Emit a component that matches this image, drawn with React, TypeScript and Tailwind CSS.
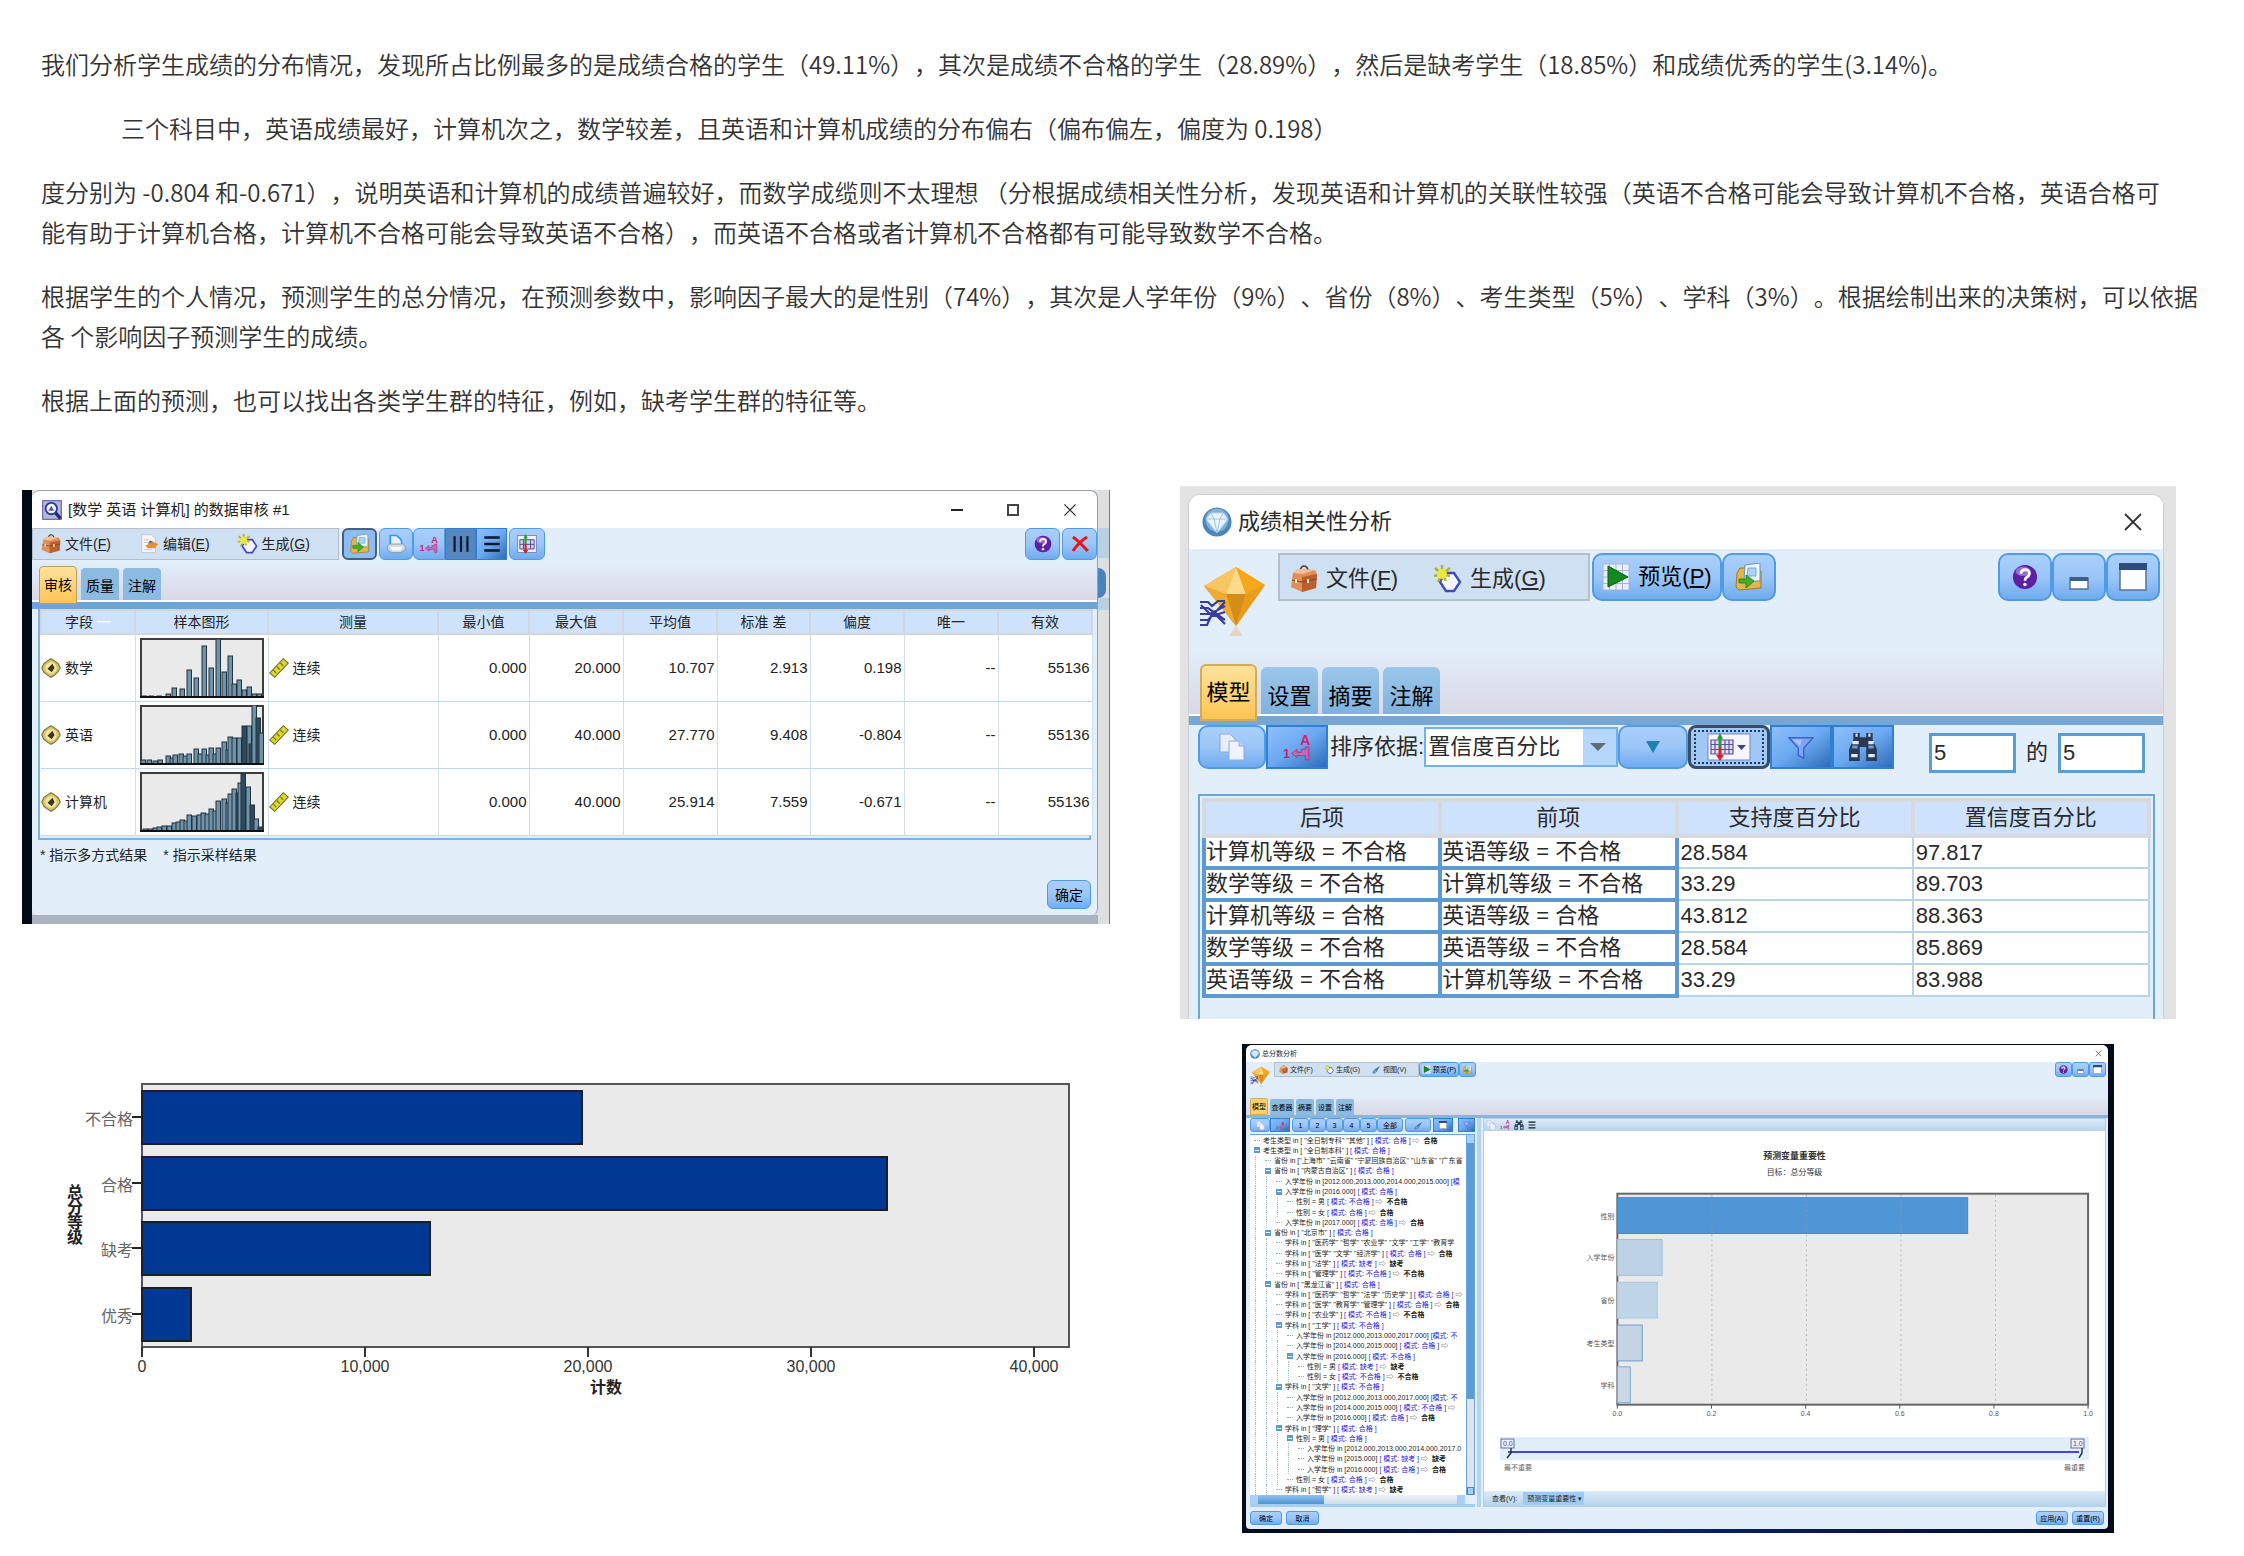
import React from "react";

type IconProps = { className?: string };

const btn =
  "flex shrink-0 items-center justify-center border border-[#4f9be6] bg-linear-to-b from-[#a9cffb] via-[#9cc6f8] to-[#6fabee] text-black";
const pressed =
  "flex shrink-0 items-center justify-center border border-[#2f7fd6] bg-linear-to-br from-[#8fc0fb] via-[#6aa8f0] to-[#2f6cb8] text-black";

/* ---------- icons ---------- */

const Briefcase = ({ className }: IconProps) => (
  <svg viewBox="0 0 28 28" className={className} aria-hidden="true">
    <path d="M10 6 Q11 1 14 1 Q17 1 18 5" fill="none" stroke="#4a3a30" strokeWidth="1.6" />
    <path d="M3 8 L8 4 L25 5 L27 9 L26 23 L12 27 L1 22 Z" fill="#e08e5a" />
    <path d="M3 8 L8 4 L25 5 L13 9 Z" fill="#f6c09a" />
    <path d="M12 12 L27 9 L26 23 L12 27 Z" fill="#b9602e" />
    <path d="M2 15 L12 17 L27 14" fill="none" stroke="#8f4520" strokeWidth="1.2" />
    <path d="M6 14 V18 M18 14 V18" stroke="#f4ead8" strokeWidth="2" />
  </svg>
);

const Sparkle = ({ className }: IconProps) => (
  <svg viewBox="0 0 28 28" className={className} aria-hidden="true">
    <path d="M11 8 H20 L26 17 L20 26 H12 L6 17 Z" fill="#f4f7ff" stroke="#4448c0" strokeWidth="2.4" />
    <path d="M8 9 L1 3 M8 9 L8 0 M8 9 L16 3 M8 9 L0 11 M8 9 L16 11 M8 9 L4 17 M8 9 L12 16" stroke="#b3b02a" strokeWidth="2.4" />
    <circle cx="8" cy="9" r="5" fill="#e8ea3c" />
  </svg>
);

const EditPage = ({ className }: IconProps) => (
  <svg viewBox="0 0 28 28" className={className} aria-hidden="true">
    <path d="M4 1 H17 L23 7 V26 H4 Z" fill="#f8f8fb" stroke="#b9bccb" />
    <path d="M7 8 H14 M7 12 H15 M7 22 H19" stroke="#c4c9da" strokeWidth="1.5" />
    <path d="M9 16 L20 11 L27 14 L22 20 L12 20 Z" fill="#e98c3c" />
    <path d="M15 9 L20 11 L13 14 Z" fill="#595a60" />
  </svg>
);

const ExportIcon = ({ className }: IconProps) => (
  <svg viewBox="0 0 28 28" className={className} aria-hidden="true">
    <path d="M2 10 L5 5 H11 L13 8 H26 V25 L4 27 L1 24 Z" fill="#e3b648" stroke="#9a7b26" />
    <path d="M10 2 L25 0 V18 H9 Z" fill="#eef6fd" stroke="#6d93b8" />
    <path d="M13 5 H21 V13 H12 Z" fill="#a9d5f4" stroke="#5c9aca" strokeWidth="0.8" />
    <path d="M4 16 H11 V12 L19 18 L11 25 V20 H4 Z" fill="#42b02e" stroke="#23761a" strokeWidth="0.8" />
  </svg>
);

const PrinterIcon = ({ className }: IconProps) => (
  <svg viewBox="0 0 28 28" className={className} aria-hidden="true">
    <path d="M6 2 H15 L21 8 L23 17 H6 Z" fill="#e4f3ff" stroke="#2d96ef" strokeWidth="2.2" />
    <path d="M2 17 L5 14 H24 L27 18 V22 L20 26 H8 L2 22 Z" fill="#d4d9df" stroke="#7d8b99" />
    <path d="M6 18 H24 L20 23 H9 Z" fill="#f6f8fa" />
  </svg>
);

const SortIcon = ({ className }: IconProps) => (
  <svg viewBox="0 0 28 28" className={className} aria-hidden="true">
    <text x="17" y="12" fontSize="13" fontWeight="700" fill="#d3206d" fontFamily="Liberation Sans">A</text>
    <text x="1" y="24" fontSize="12" fontWeight="700" fill="#d3206d" fontFamily="Liberation Sans">1</text>
    <path d="M9 20 L14 16 V19 H18 V16 H22 V14 H25 V26 H22 V22 H14 V24 Z" fill="#b46ec0" stroke="#d3206d" strokeWidth="0.8" />
  </svg>
);

const Columns = ({ className }: IconProps) => (
  <svg viewBox="0 0 28 28" className={className} aria-hidden="true">
    <path d="M4 2 V26 M14 2 V26 M24 2 V26" stroke="#0c1826" strokeWidth="3.4" />
  </svg>
);

const Rows = ({ className }: IconProps) => (
  <svg viewBox="0 0 28 28" className={className} aria-hidden="true">
    <path d="M2 4 H26 M2 14 H26 M2 24 H26" stroke="#0c1826" strokeWidth="4" />
  </svg>
);

const GridArrows = ({ className }: IconProps) => (
  <svg viewBox="0 0 28 28" className={className} aria-hidden="true">
    <rect x="1" y="2" width="26" height="24" fill="#f2f2fb" stroke="#6a6aa8" />
    <path d="M4 8 H24 V21 H4 Z M4 14.500 H24 M9 8 V21 M19 8 V21" fill="#d3d3f0" stroke="#4b4b95" strokeWidth="1.3" />
    <path d="M12 0 L15 6 H13.500 V14 H10.500 V6 H9 Z" fill="#23a02c" />
    <path d="M12 28 L16 22 H13.500 V14 H10.500 V22 H8 Z" fill="#d8232b" />
  </svg>
);

const GridMenu = ({ className }: IconProps) => (
  <svg viewBox="0 0 44 28" className={className} aria-hidden="true">
    <rect x="1" y="1" width="42" height="26" fill="#f6f6fc" stroke="#7d86b8" />
    <path d="M4 7 H26 V21 H4 Z M4 11.500 H26 M4 16.500 H26 M8 7 V21 M18 7 V21 M22 7 V21" fill="#e4e0f4" stroke="#5a4fa0" strokeWidth="1.2" />
    <path d="M13 0 L16 6 H14.500 V14 H11.500 V6 H10 Z" fill="#23a02c" />
    <path d="M13 28 L17 22 H14.500 V14 H11.500 V22 H9 Z" fill="#d8232b" />
    <path d="M30 12 H39 L34.500 17 Z" fill="#3b3f9e" />
  </svg>
);

const HelpIcon = ({ className }: IconProps) => (
  <svg viewBox="0 0 28 28" className={className} aria-hidden="true">
    <circle cx="14" cy="14" r="13" fill="#5c1fa6" />
    <ellipse cx="12" cy="8" rx="8" ry="5" fill="#9b6bd0" />
    <path d="M9.500 10.500 Q10 6 14.500 6 Q19 6.500 18.800 10.500 Q18.500 13 15.500 14.500 Q14 15.500 14 18" fill="none" stroke="#fff" strokeWidth="3" />
    <circle cx="14" cy="22" r="1.900" fill="#fff" />
  </svg>
);

const RedX = ({ className }: IconProps) => (
  <svg viewBox="0 0 28 28" className={className} aria-hidden="true">
    <path d="M3 3 Q13 10 26 25 M25 3 Q12 11 3 25" fill="none" stroke="#e8141c" strokeWidth="4.600" />
  </svg>
);

const Gem = ({ className }: IconProps) => (
  <svg viewBox="0 0 68 72" className={className} aria-hidden="true">
    <path d="M38 60 L31 70 H45 Z" fill="#e3d6c4" />
    <path d="M38 1 L67 19 L38 60 L6 20 Z" fill="#f0a51e" />
    <path d="M38 1 L48 28 L28 28 Z" fill="#fcd98c" />
    <path d="M38 1 L6 20 L28 28 Z" fill="#f8c565" />
    <path d="M38 1 L67 19 L48 28 Z" fill="#f5a81b" />
    <path d="M28 28 H48 L38 60 Z" fill="#d58d1a" />
    <path d="M48 28 L67 19 L38 60 Z" fill="#e99c18" />
    <path d="M6 20 L28 28 L38 60 Z" fill="#eeaa33" />
    <path d="M2 36 H10 L14 40 L20 35 H27 M2 42 H10 L27 54 M2 48 H12 L27 40 M2 54 H10 L27 36 M2 59 H9 L15 46 L27 58 M3 39 L14 50 L27 46" fill="none" stroke="#3c3c98" strokeWidth="2.200" />
  </svg>
);

const BlueGem = ({ className }: IconProps) => (
  <svg viewBox="0 0 30 30" className={className} aria-hidden="true">
    <circle cx="15" cy="15" r="14.500" fill="#4a86bd" />
    <circle cx="15" cy="13" r="11.500" fill="#83b2da" />
    <path d="M9 6 H21 L26 12 L15 26 L4 12 Z" fill="#e9f5fc" stroke="#b7d5ea" />
    <path d="M4 12 H26 M9 6 L12 12 L15 26 L18 12 L21 6" fill="none" stroke="#9dc4e0" />
  </svg>
);

const AuditIcon = ({ className }: IconProps) => (
  <svg viewBox="0 0 28 28" className={className} aria-hidden="true">
    <rect x="1" y="1" width="26" height="26" fill="#b4b8e0" stroke="#5557a8" strokeWidth="1.500" />
    <circle cx="13" cy="12" r="8" fill="#f2f4ff" stroke="#35378c" strokeWidth="2.600" />
    <path d="M19 18 L26 26" stroke="#25277c" strokeWidth="4.500" />
    <path d="M9 15 L13 8 L17 15 Z" fill="#5557a8" />
  </svg>
);

const FieldIcon = ({ className }: IconProps) => (
  <svg viewBox="0 0 28 28" className={className} aria-hidden="true">
    <path d="M14 1 L19 4 L24 8 L27 14 L23 20 L19 24 L14 27 L9 24 L4 20 L1 14 L4 8 L9 4 Z" fill="#d8c468" stroke="#77703a" strokeWidth="1.500" />
    <circle cx="14" cy="14" r="8" fill="#f4e6a0" />
    <path d="M16 8 L19 14 L15 20 L9 15 Z" fill="#3c3820" />
  </svg>
);

const Ruler = ({ className }: IconProps) => (
  <svg viewBox="0 0 28 28" className={className} aria-hidden="true">
    <path d="M1 21 L20 1 L27 7 L8 27 Z" fill="#dcd62f" stroke="#6b6a1c" strokeWidth="1.500" />
    <path d="M6 17 L10 21 M11 12 L15 16 M16 7 L20 11" stroke="#7b7a22" strokeWidth="1.800" />
  </svg>
);

const CopyIcon = ({ className }: IconProps) => (
  <svg viewBox="0 0 28 28" className={className} aria-hidden="true">
    <path d="M2 1 H12 L17 6 V19 H2 Z" fill="#e6edfb" stroke="#8fa8dc" />
    <path d="M11 8 H21 L26 13 V27 H11 Z" fill="#eef3fd" stroke="#8fa8dc" />
    <path d="M21 8 V13 H26" fill="#c8d6f2" stroke="#8fa8dc" />
  </svg>
);

const Funnel = ({ className }: IconProps) => (
  <svg viewBox="0 0 28 28" className={className} aria-hidden="true">
    <path d="M1 4 H27 L17 15 V26 L11 23 V15 Z" fill="#7fa6f2" stroke="#3c62c8" strokeWidth="1.500" />
    <path d="M5 6 H15 L13 13 Z" fill="#aac6fa" />
  </svg>
);

const Binoculars = ({ className }: IconProps) => (
  <svg viewBox="0 0 28 28" className={className} aria-hidden="true">
    <path d="M5 1 H11 V5 H17 V1 H23 V7 L27 16 V27 H17 V14 H11 V27 H1 V16 L5 7 Z" fill="#2a3a52" />
    <path d="M4 10 H10 M3 22 H9 M19 10 H24 M19 22 H25 M7 3 H9 M19 3 H21" stroke="#dfe8f4" strokeWidth="3" />
    <path d="M4 14 H9 M19 14 H24" stroke="#6a9be0" strokeWidth="3" />
  </svg>
);

const MinWin = ({ className }: IconProps) => (
  <svg viewBox="0 0 28 28" className={className} aria-hidden="true">
    <rect x="5" y="15" width="18" height="11" fill="#fff" stroke="#5a7396" strokeWidth="1.500" />
    <rect x="5" y="14" width="18" height="4" fill="#3d5f8d" />
  </svg>
);

const MaxWin = ({ className }: IconProps) => (
  <svg viewBox="0 0 28 28" className={className} aria-hidden="true">
    <rect x="1" y="1" width="26" height="26" fill="#fff" stroke="#5a7396" strokeWidth="1.500" />
    <rect x="0" y="0" width="28" height="7" fill="#2d4c7c" />
  </svg>
);

const PlayGrid = ({ className }: IconProps) => (
  <svg viewBox="0 0 28 28" className={className} aria-hidden="true">
    <path d="M1 1 H27 V27 H1 Z M1 7.500 H27 M1 14 H27 M1 20.500 H27 M7.500 1 V27 M14 1 V27 M20.500 1 V27" fill="#e9effa" stroke="#a9b4d8" />
    <path d="M6 3 L26 14 L6 24 Z" fill="#128a1e" stroke="#0b5c14" />
  </svg>
);

const Brush = ({ className }: IconProps) => (
  <svg viewBox="0 0 28 28" className={className} aria-hidden="true">
    <path d="M26 2 L14 20 L8 14 Z" fill="#3e6f9c" />
    <path d="M12 14 L16 19 L6 27 L2 25 L4 18 Z" fill="#6ea7d8" stroke="#24486c" />
  </svg>
);

const CloseX = ({ className }: IconProps) => (
  <svg viewBox="0 0 20 20" className={className} aria-hidden="true">
    <path d="M2 2 L18 18 M18 2 L2 18" stroke="#333" strokeWidth="1.800" />
  </svg>
);

/* ---------- window 1: data audit ---------- */

const math: [number, number][] = [[2, 1], [9, 1], [17, 1], [26, 3], [32, 9], [40, 8], [47, 27], [54, 19], [62, 51], [69, 29], [76, 58], [82, 25], [88, 41], [92, 13], [97, 17], [102, 7], [107, 10], [112, 3], [117, 3]];
const english: [number, number][] = [[1, 4], [7, 4], [13, 3], [18, 4], [26, 8], [30, 6], [33, 9], [39, 10], [43, 8], [47, 10], [54, 15], [58, 10], [62, 15], [66, 9], [69, 16], [73, 10], [76, 16], [82, 22], [86, 14], [88, 27], [92, 26], [97, 26], [102, 38], [107, 38], [109, 20], [112, 59], [116, 46], [119, 31]];
const computer: [number, number][] = [[3, 2], [8, 2], [13, 3], [17, 4], [22, 5], [27, 5], [32, 8], [36, 9], [40, 11], [44, 10], [47, 16], [52, 15], [57, 16], [61, 18], [65, 17], [69, 22], [73, 20], [76, 30], [82, 32], [86, 28], [88, 37], [92, 42], [96, 38], [98, 48], [101, 57], [106, 44], [110, 26], [114, 12], [118, 4]];

const Histogram = ({ bars, label }: { bars: [number, number][]; label: string }) => (
  <svg viewBox="0 0 124 60" className="h-[60px] w-[124px]" role="img" aria-label={label}>
    <rect x="1" y="1" width="122" height="58" fill="#eaeaea" stroke="#3d3d3d" strokeWidth="2" />
    {bars.map(([x, h], i) => (
      <rect key={i} x={x} y={59 - h} width="4.500" height={h} fill={i > 20 && i % 2 === 0 ? "#2d4b5e" : "#6f93a8"} stroke="#22333f" strokeWidth="1" />
    ))}
    <path d="M0 59 H124" stroke="#111" strokeWidth="2" />
  </svg>
);

const auditRows = [
  { name: "数学", bars: math, v: ["0.000", "20.000", "10.707", "2.913", "0.198", "--", "55136"] },
  { name: "英语", bars: english, v: ["0.000", "40.000", "27.770", "9.408", "-0.804", "--", "55136"] },
  { name: "计算机", bars: computer, v: ["0.000", "40.000", "25.914", "7.559", "-0.671", "--", "55136"] },
];

const AuditWindow = () => (
  <section className="mt-1 flex h-[434px] overflow-hidden bg-[#dedfe1] text-sm leading-none text-[#222]" aria-label="数据审核">
    <div className="w-[10px] shrink-0 bg-[#020a18]" />
    <div className="flex min-w-0 flex-1 flex-col border-b-9 border-[#a9b4c0]">
      <div className="flex min-h-0 flex-1 flex-col rounded-t-lg rounded-b-md border-t border-r border-[#9aa0a6] bg-[#e2effb]">
        <header className="flex h-[37px] shrink-0 items-center rounded-t-lg bg-white pr-5 pl-[10px]">
          <AuditIcon className="size-5" />
          <h2 className="ml-1.5 text-[15px]">[数学 英语 计算机] 的数据审核 #1</h2>
          <div className="ml-auto flex items-center gap-11">
            <button aria-label="最小化" className="h-0.5 w-3 bg-[#222]" />
            <button aria-label="最大化" className="size-3 border-2 border-[#444]" />
            <button aria-label="关闭"><CloseX className="size-3.5" /></button>
          </div>
        </header>
        <div className="flex h-[72px] shrink-0 flex-col bg-linear-to-b from-[#e2effb] from-45% to-[#d9d8e6]">
          <div className="flex h-8 items-stretch">
            <nav className="flex w-[307px] items-center gap-7 border border-[#b4bdc8] bg-[#cfe0f2] pl-2">
              <button className="flex items-center gap-1"><Briefcase className="size-5" /><span>文件(<u>F</u>)</span></button>
              <button className="flex items-center gap-1"><EditPage className="size-5" /><span>编辑(<u>E</u>)</span></button>
              <button className="flex items-center gap-1"><Sparkle className="size-5" /><span>生成(<u>G</u>)</span></button>
            </nav>
            <div className="ml-[3px] flex">
              <button aria-label="导出" className="mr-0.5 flex w-[35px] items-center justify-center rounded-md border-2 border-[#46617e] bg-[#8fbcf0]"><ExportIcon className="size-5" /></button>
              <button aria-label="打印" className={`${btn} w-[34px] rounded-md`}><PrinterIcon className="size-5" /></button>
              <button aria-label="排序" className={`${btn} w-8 rounded-l-md`}><SortIcon className="size-5" /></button>
              <button aria-label="列" className="flex w-[31px] items-center justify-center border border-[#2f7fd6] bg-[#5687c0]"><Columns className="size-[18px]" /></button>
              <button aria-label="行" className={`${pressed} mr-0.5 w-[31px]`}><Rows className="size-[18px]" /></button>
              <button aria-label="显示" className={`${btn} w-9 rounded-md`}><GridArrows className="size-5" /></button>
            </div>
            <div className="ml-auto flex gap-0.5">
              <button aria-label="帮助" className={`${btn} w-[35px] rounded-md`}><HelpIcon className="size-[18px]" /></button>
              <button aria-label="放弃" className={`${btn} w-[35px] rounded-md`}><RedX className="size-[18px]" /></button>
            </div>
          </div>
          <div role="tablist" className="mt-auto flex items-end gap-1 pl-[7px]">
            <button role="tab" aria-selected="true" className="relative -mb-1 h-[38px] w-[38px] rounded-t border border-[#b9a05a] bg-linear-to-b from-[#fde29a] to-[#fcc550] text-black">审核</button>
            <button role="tab" aria-selected="false" className="h-8 w-[38px] rounded-t bg-[#8cbbe2] pt-1 text-black">质量</button>
            <button role="tab" aria-selected="false" className="h-8 w-[38px] rounded-t bg-[#8cbbe2] pt-1 text-black">注解</button>
          </div>
        </div>
        <div className="h-[9px] shrink-0 border-t-2 border-white bg-[#6fa4d6]" />
        <div className="mx-[6px] border-2 border-t-0 border-[#7fb2e2] bg-[#e2effb] pr-1 pb-0.5">
          <table className="w-full table-fixed border-collapse bg-white">
            <colgroup>
              <col className="w-[94px]" /><col className="w-[133px]" /><col className="w-[170px]" /><col className="w-[91px]" /><col className="w-[94px]" />
              <col className="w-[94px]" /><col className="w-[93px]" /><col className="w-[94px]" /><col className="w-[94px]" /><col className="w-[94px]" />
            </colgroup>
            <thead>
              <tr className="h-6">
                {["字段", "样本图形", "测量", "最小值", "最大值", "平均值", "标准 差", "偏度", "唯一", "有效"].map((h, i) => (
                  <th key={h} scope="col" className="border-2 border-[#d3d7dd] bg-[#cfe2fb] font-normal">
                    {h}{i === 0 && <span className="ml-1 text-white">一</span>}
                  </th>
                ))}
              </tr>
            </thead>
            <tbody>
              {auditRows.map((r) => (
                <tr key={r.name} className="h-[67px] border-b border-[#bcd7ef]">
                  <td className="border-r border-[#cfe0f0]"><span className="flex items-center gap-1"><FieldIcon className="size-5" />{r.name}</span></td>
                  <td className="border-r border-[#cfe0f0] pl-1"><Histogram bars={r.bars} label={r.name} /></td>
                  <td className="border-r border-[#cfe0f0]"><span className="flex items-center gap-1"><Ruler className="size-5" />连续</span></td>
                  {r.v.map((v, i) => (
                    <td key={i} className="border-r border-[#cfe0f0] pr-0.5 text-right text-[15px]">{v}</td>
                  ))}
                </tr>
              ))}
            </tbody>
          </table>
        </div>
        <p className="mt-2 flex gap-4 pl-2"><span>* 指示多方式结果</span><span>* 指示采样结果</span></p>
        <button className={`${btn} mt-auto mr-[6px] mb-[6px] h-[29px] w-11 self-end rounded-md`}>确定</button>
      </div>
    </div>
    <div className="flex w-3 shrink-0 flex-col border-r border-[#77797c]">
      <div className="mt-[38px] h-[30px] bg-[#b9cfe2]" />
      <div className="mt-2.5 h-[30px] w-2 rounded-r-full bg-[#4a83bb]" />
      <div className="h-3 bg-[#b9cfe2]" />
    </div>
  </section>
);

/* ---------- window 2: correlation analysis ---------- */

const rules = [
  ["计算机等级 = 不合格", "英语等级 = 不合格", "28.584", "97.817"],
  ["数学等级 = 不合格", "计算机等级 = 不合格", "33.29", "89.703"],
  ["计算机等级 = 合格", "英语等级 = 合格", "43.812", "88.363"],
  ["数学等级 = 不合格", "英语等级 = 不合格", "28.584", "85.869"],
  ["英语等级 = 不合格", "计算机等级 = 不合格", "33.29", "83.988"],
];

const CorrelationWindow = () => (
  <section className="h-[533px] overflow-hidden bg-[#e3e3e4] pt-2 pr-3 pl-2 text-[22px] leading-none text-[#2a2a2a]" aria-label="成绩相关性分析">
    <div className="flex h-full flex-col overflow-hidden rounded-t-xl border border-b-0 border-[#cfcfd2] bg-[#e2effb]">
      <header className="flex h-[54px] shrink-0 items-center bg-white pr-5 pl-[13px]">
        <BlueGem className="size-[30px]" />
        <h2 className="ml-1.5 text-[22px]">成绩相关性分析</h2>
        <button aria-label="关闭" className="ml-auto"><CloseX className="size-5" /></button>
      </header>
      <div className="flex h-[165px] shrink-0 flex-col bg-linear-to-b from-[#e2effb] from-60% to-[#d9d8e6]">
        <div className="flex pt-1 pr-[3px] pl-[9px]">
          <Gem className="mt-[13px] h-[72px] w-[68px]" />
          <nav className="ml-3 flex h-12 w-[312px] items-center gap-9 border-2 border-[#b7bfc9] bg-[#cfe0f2] pt-1 pl-2.5">
            <button className="flex items-center gap-2"><Briefcase className="size-7" /><span>文件(<u>F</u>)</span></button>
            <button className="flex items-center gap-2"><Sparkle className="size-7" /><span>生成(<u>G</u>)</span></button>
          </nav>
          <button className={`${btn} ml-0.5 h-12 w-[130px] gap-2 rounded-[10px] border-2`}><PlayGrid className="size-7" /><span>预览(<u>P</u>)</span></button>
          <button aria-label="导出" className={`${btn} h-12 w-[54px] rounded-[10px] border-2`}><ExportIcon className="size-7" /></button>
          <div className="ml-auto flex">
            <button aria-label="帮助" className={`${btn} h-12 w-[54px] rounded-[10px] border-2`}><HelpIcon className="size-[26px]" /></button>
            <button aria-label="最小化" className={`${btn} h-12 w-[54px] rounded-[10px] border-2`}><MinWin className="size-7" /></button>
            <button aria-label="最大化" className={`${btn} h-12 w-[54px] rounded-[10px] border-2`}><MaxWin className="size-7" /></button>
          </div>
        </div>
        <div role="tablist" className="mt-auto flex items-end gap-1 pl-[11px] text-black">
          <button role="tab" aria-selected="true" className="relative -mb-[7px] h-[57px] w-[57px] rounded-t-md border-2 border-[#d0ac5c] bg-linear-to-b from-[#fde29a] to-[#fcc550]">模型</button>
          {["设置", "摘要", "注解"].map((t) => (
            <button key={t} role="tab" aria-selected="false" className="h-[47px] w-[57px] rounded-t-md bg-linear-to-b from-[#9cc6ea] to-[#7fb2de] pt-3">{t}</button>
          ))}
        </div>
      </div>
      <div className="h-[11px] shrink-0 border-t-2 border-white bg-[#74a6d6]" />
      <div className="flex h-11 shrink-0 items-center pr-[18px] pl-[9px]">
        <button aria-label="复制" className={`${btn} h-11 w-[68px] rounded-[10px] border-2`}><CopyIcon className="size-7" /></button>
        <button aria-label="排序" className={`${pressed} h-11 w-[62px] border-2`}><SortIcon className="size-[30px]" /></button>
        <label htmlFor="sort-by" className="ml-0.5 whitespace-nowrap">排序依据:</label>
        <div className="relative flex h-10 w-[194px] items-center border-2 border-[#6fb0f0] bg-[#b5d7fb]">
          <select id="sort-by" className="h-full w-[157px] appearance-none bg-white pl-0.5">
            <option>置信度百分比</option>
          </select>
          <span className="pointer-events-none absolute right-2.5 border-x-8 border-t-8 border-x-transparent border-t-[#5f6b78]" />
        </div>
        <button aria-label="方向" className={`${btn} h-11 w-[70px] rounded-[10px] border-2`}>
          <span className="border-x-7 border-t-12 border-x-transparent border-t-[#1f7fae]" />
        </button>
        <button aria-label="显示" className="flex h-11 w-[82px] shrink-0 items-center justify-center rounded-lg border-3 border-[#3c4c60] bg-[#9fc8f6]">
          <span className="flex h-[34px] w-[70px] items-center justify-center border-2 border-dotted border-[#1d3a60]"><GridMenu className="h-7 w-11" /></span>
        </button>
        <button aria-label="过滤" className={`${pressed} h-11 w-[62px] border-2`}><Funnel className="size-[26px]" /></button>
        <button aria-label="查找" className={`${pressed} h-11 w-[62px] border-2`}><Binoculars className="size-[30px]" /></button>
        <div className="mt-3 ml-auto flex items-center gap-2.5">
          <input aria-label="当前" defaultValue="5" className="h-10 w-[87px] border-3 border-[#5d9bd3] bg-white pl-0.5" />
          <span>的</span>
          <input aria-label="总数" defaultValue="5" className="h-10 w-[87px] border-3 border-[#5d9bd3] bg-white pl-0.5" />
        </div>
      </div>
      <div className="mt-[25px] mr-2 ml-[9px] flex-1 border-2 border-b-0 border-[#6aa6da] p-0.5">
        <table className="w-full table-fixed border-collapse">
          <thead>
            <tr className="h-9">
              {["后项", "前项", "支持度百分比", "置信度百分比"].map((h) => (
                <th key={h} scope="col" className="border-4 border-[#d6d9de] bg-[#cfe2fb] font-normal">{h}</th>
              ))}
            </tr>
          </thead>
          <tbody>
            {rules.map((r, i) => (
              <tr key={i} className="h-8 bg-white">
                {r.map((c, j) => (
                  <td key={j} className={j < 2 ? "border-4 border-[#5e9ad2] whitespace-nowrap" : "border-2 border-[#b9d3ea] pl-0.5"}>{c}</td>
                ))}
              </tr>
            ))}
          </tbody>
        </table>
      </div>
    </div>
  </section>
);

/* ---------- bar chart: total grade counts ---------- */

const gradeBars = [
  { name: "不合格", y: 21, w: 440 },
  { name: "合格", y: 87, w: 745 },
  { name: "缺考", y: 152, w: 288 },
  { name: "优秀", y: 218, w: 49 },
];

const GradeChart = () => (
  <svg viewBox="0 0 1040 340" className="w-full" role="img" aria-label="总分等级计数" fontFamily="'Liberation Sans','Noto Sans CJK SC',sans-serif" fontSize="16">
    <rect x="92" y="14" width="927" height="263" fill="#eaeaea" stroke="#555" strokeWidth="2" />
    {gradeBars.map((b) => (
      <g key={b.name}>
        <rect x="92" y={b.y} width={b.w} height="53" fill="#003893" stroke="#1a1f2b" strokeWidth="2" />
        <path d={`M82 ${b.y + 26} H92`} stroke="#222" strokeWidth="2" />
        <text x="83" y={b.y + 34} textAnchor="end" fill="#666">{b.name}</text>
      </g>
    ))}
    {["0", "10,000", "20,000", "30,000", "40,000"].map((t, i) => (
      <g key={t}>
        <path d={`M${92 + i * 223} 277 V287`} stroke="#333" strokeWidth="2" />
        <text x={92 + i * 223} y="302" textAnchor="middle" fill="#333">{t}</text>
      </g>
    ))}
    <text x="556" y="323" textAnchor="middle" fontWeight="700" fill="#222">计数</text>
    {["总", "分", "等", "级"].map((c, i) => (
      <text key={c} x="25" y={128 + i * 15} textAnchor="middle" fontWeight="700" fill="#222">{c}</text>
    ))}
  </svg>
);

/* ---------- window 3: decision tree ---------- */

/* depth, has a toggle, rule, mode, result */
type Row = [number, boolean, string, string, string];
const grades = ["合格", "不合格", "缺考"];
const tree: Row[] = [
  [0, false, '考生类型 in [ "全日制专科" "其他" ]', "合格", "合格"],
  [0, true, '考生类型 in [ "全日制本科" ]', "合格", ""],
  [1, false, '省份 in ["上海市" "云南省" "宁夏回族自治区" "山东省" "广东省', "", ""],
  [1, true, '省份 in [ "内蒙古自治区" ]', "合格", ""],
  [2, false, "入学年份 in [2012.000,2013.000,2014.000,2015.000]", "[模", ""],
  [2, true, "入学年份 in [2016.000]", "合格", ""],
  [3, false, "性别 = 男", "不合格", "不合格"],
  [3, false, "性别 = 女", "合格", "合格"],
  [2, false, "入学年份 in [2017.000]", "合格", "合格"],
  [1, true, '省份 in [ "北京市" ]', "合格", ""],
  [2, false, '学科 in [ "医药学" "哲学" "农业学" "文学" "工学" "教育学', "", ""],
  [2, false, '学科 in [ "医学" "文学" "经济学" ]', "合格", "合格"],
  [2, false, '学科 in [ "法学" ]', "缺考", "缺考"],
  [2, false, '学科 in [ "管理学" ]', "不合格", "不合格"],
  [1, true, '省份 in [ "黑龙江省" ]', "合格", ""],
  [2, false, '学科 in [ "医药学" "哲学" "法学" "历史学" ]', "合格", " "],
  [2, false, '学科 in [ "医学" "教育学" "管理学" ]', "合格", "合格"],
  [2, false, '学科 in [ "农业学" ]', "不合格", "不合格"],
  [2, true, '学科 in [ "工学" ]', "不合格", ""],
  [3, false, "入学年份 in [2012.000,2013.000,2017.000]", "[模式: 不", ""],
  [3, false, "入学年份 in [2014.000,2015.000]", "合格", " "],
  [3, true, "入学年份 in [2016.000]", "不合格", ""],
  [4, false, "性别 = 男", "缺考", "缺考"],
  [4, false, "性别 = 女", "不合格", "不合格"],
  [2, true, '学科 in [ "文学" ]', "不合格", ""],
  [3, false, "入学年份 in [2012.000,2013.000,2017.000]", "[模式: 不", ""],
  [3, false, "入学年份 in [2014.000,2015.000]", "不合格", " "],
  [3, false, "入学年份 in [2016.000]", "合格", "合格"],
  [2, true, '学科 in [ "理学" ]', "合格", ""],
  [3, true, "性别 = 男", "合格", ""],
  [4, false, "入学年份 in [2012.000,2013.000,2014.000,2017.0", "", ""],
  [4, false, "入学年份 in [2015.000]", "缺考", "缺考"],
  [4, false, "入学年份 in [2016.000]", "合格", "合格"],
  [3, false, "性别 = 女", "合格", "合格"],
  [2, false, '学科 in [ "哲学" ]', "缺考", "缺考"],
];

const TreeRow = ({ row }: { row: Row }) => {
  const [depth, toggle, rule, mode, result] = row;
  return (
    <li className="flex min-h-0 flex-1 items-center whitespace-pre">
      {Array.from({ length: depth }, (_, i) => (
        <span key={i} className="flex h-full w-[11px] shrink-0 justify-center"><span className="border-l border-dotted border-[#9cc3e4]" /></span>
      ))}
      <span className="flex w-[13px] shrink-0 items-center pl-1">
        {toggle ? (
          <button aria-label="折叠" className="flex size-1.5 items-center justify-center bg-[#5a9bd4]"><span className="h-px w-1 bg-white" /></button>
        ) : (
          <span className="w-1.5 border-t border-dotted border-[#7fb0d8]" />
        )}
      </span>
      {rule}
      {mode && <span className="text-[#2a22e0]"> {grades.includes(mode) ? `[ 模式: ${mode} ]` : mode}</span>}
      {result && <span className="font-bold"> <span className="font-normal">⇨</span>  {result}</span>}
    </li>
  );
};

const importance = [
  { name: "性别", y: 4, w: 352, fill: "#5096d6", stroke: "#4488c8" },
  { name: "入学年份", y: 46, w: 45, fill: "#bdd2e4", stroke: "#9cc0e0" },
  { name: "省份", y: 89, w: 40, fill: "#bfd4e6", stroke: "#a8c8e4" },
  { name: "考生类型", y: 132, w: 25, fill: "#c4d4e4", stroke: "#6a9fd4" },
  { name: "学科", y: 174, w: 13, fill: "#c9d8e4", stroke: "#7aaad8" },
];

const ImportanceChart = () => (
  <svg viewBox="0 2 624 298" className="w-full" role="img" aria-label="预测变量重要性" fontFamily="'Liberation Sans','Noto Sans CJK SC',sans-serif" fontSize="7" fill="#555">
    <text x="312" y="30" textAnchor="middle" fontSize="9" fontWeight="700" fill="#333">预测变量重要性</text>
    <text x="312" y="46" textAnchor="middle" fontSize="8" fill="#333">目标：总分等级</text>
    <rect x="134" y="65" width="473" height="212" fill="#eaeaea" stroke="#666" strokeWidth="2" />
    {importance.map((b) => (
      <g key={b.name}>
        <rect x="134" y={65 + b.y} width={b.w} height="36" fill={b.fill} stroke={b.stroke} />
        <text x="131" y={65 + b.y + 21} textAnchor="end">{b.name}</text>
      </g>
    ))}
    {[0, 1, 2, 3, 4, 5].map((i) => (
      <g key={i}>
        {i > 0 && i < 5 && <path d={`M${134 + i * 95} 66 V276`} stroke="#999" strokeDasharray="2 3" opacity="0.600" />}
        <path d={`M${134 + i * (473 / 5)} 277 V281`} stroke="#555" />
        <text x={134 + i * (473 / 5)} y="288" textAnchor="middle">{(i / 5).toFixed(1)}</text>
      </g>
    ))}
  </svg>
);

const smallBtn = "rounded-[3px]";

const TreeWindow = () => (
  <section className="flex h-[489px] overflow-hidden bg-[#030a1c] pt-px pr-1.5 pl-1 text-[7px] leading-none text-[#222]" aria-label="决策树">
    <div className="flex min-w-0 flex-1 flex-col">
      <div className="flex min-h-0 flex-1 flex-col overflow-hidden rounded-t-md rounded-b-sm bg-[#e2effb]">
        <header className="flex h-[17px] shrink-0 items-center bg-white pr-1.5 pl-1">
          <BlueGem className="size-2.5" />
          <h2 className="ml-0.5 text-[7px]">总分数分析</h2>
          <button aria-label="关闭" className="ml-auto"><CloseX className="size-[7px]" /></button>
        </header>
        <div className="flex h-[53px] shrink-0 flex-col bg-linear-to-b from-[#e2effb] from-60% to-[#d9d8e6]">
          <div className="flex h-[15px] items-start pr-0.5 pl-1">
            <Gem className="mt-1 h-[22px] w-5 shrink-0" />
            <nav className="ml-1 flex h-[15px] w-[145px] shrink-0 items-center gap-3 border border-[#b7bfc9] bg-[#cfe0f2] pl-1">
              <button className="flex items-center gap-0.5"><Briefcase className="size-[9px]" />文件(F)</button>
              <button className="flex items-center gap-0.5"><Sparkle className="size-[9px]" />生成(G)</button>
              <button className="flex items-center gap-0.5"><Brush className="size-[9px]" />视图(V)</button>
            </nav>
            <button className={`${btn} ${smallBtn} h-[15px] w-10 gap-0.5`}><PlayGrid className="size-[9px]" />预览(P)</button>
            <button aria-label="导出" className={`${btn} ${smallBtn} h-[15px] w-[17px]`}><ExportIcon className="size-[9px]" /></button>
            <div className="ml-auto flex">
              <button aria-label="帮助" className={`${btn} ${smallBtn} h-[15px] w-[17px]`}><HelpIcon className="size-[9px]" /></button>
              <button aria-label="最小化" className={`${btn} ${smallBtn} h-[15px] w-[17px]`}><MinWin className="size-[9px]" /></button>
              <button aria-label="最大化" className={`${btn} ${smallBtn} h-[15px] w-[17px]`}><MaxWin className="size-[9px]" /></button>
            </div>
          </div>
          <div role="tablist" className="mt-auto flex items-end gap-0.5 pl-1 text-black">
            <button role="tab" aria-selected="true" className="h-[17px] w-[18px] rounded-t-xs border border-[#d0ac5c] bg-[#fccf68]">模型</button>
            <button role="tab" aria-selected="false" className="h-4 w-6 rounded-t-xs bg-[#8cbbe2]">查看器</button>
            {["摘要", "设置", "注解"].map((t) => (
              <button key={t} role="tab" aria-selected="false" className="h-4 w-[18px] rounded-t-xs bg-[#8cbbe2]">{t}</button>
            ))}
          </div>
        </div>
        <div className="h-[3px] shrink-0 bg-[#8ab4dc]" />
        <div className="flex min-h-0 flex-1">
          <div className="flex w-[229px] shrink-0 flex-col pl-1">
            <div className="flex h-[14px] shrink-0">
              <button aria-label="复制" className={`${btn} ${smallBtn} w-5`}><CopyIcon className="size-[9px]" /></button>
              <button aria-label="排序" className={`${pressed} mr-0.5 w-5`}><SortIcon className="size-[9px]" /></button>
              {["1", "2", "3", "4", "5"].map((n) => (
                <button key={n} className={`${btn} ${smallBtn} w-[17px]`}>{n}</button>
              ))}
              <button className={`${btn} ${smallBtn} w-[26px]`}>全部</button>
              <button aria-label="标注" className={`${btn} ${smallBtn} mx-0.5 w-[26px]`}><Brush className="size-[9px]" /></button>
              <button aria-label="图形" className={`${pressed} w-5`}><MaxWin className="size-2" /></button>
              <button aria-label="过滤" className={`${pressed} ml-auto w-[17px]`}><Funnel className="size-2" /></button>
            </div>
            <div className="mt-0.5 flex min-h-0 flex-1 border-t border-[#6aa6da]">
              <ul className="flex min-w-0 flex-1 flex-col overflow-hidden bg-white">
                {tree.map((r, i) => <TreeRow key={i} row={r} />)}
              </ul>
              <div className="flex w-[9px] flex-col border-x border-[#6aa6da] bg-[#dfe3ec]">
                <div className="h-2 bg-[#a9cffb]" />
                <div className="h-[256px] bg-[#5a9bd8]" />
                <div className="mt-auto h-2 border border-[#4a86c0] bg-[#a9cffb]" />
              </div>
            </div>
            <div className="mr-2.5 flex h-[9px] shrink-0 bg-linear-to-b from-[#eef2f8] to-[#cfdbe8]">
              <div className="w-2 bg-[#a9cffb]" />
              <div className="w-[66px] bg-linear-to-b from-[#8fc3f4] to-[#4f93d2]" />
              <div className="ml-auto w-2 bg-[#a9cffb]" />
            </div>
            <div className="h-[3px] shrink-0 bg-[#a5cdf0]" />
          </div>
          <div className="flex w-2 shrink-0 items-center justify-center"><span className="h-full w-1 bg-[#b5d4ee]" /></div>
          <div className="mr-0.5 flex min-w-0 flex-1 flex-col border border-[#b0cfe8] bg-white">
            <div className="flex h-3 shrink-0 items-center gap-1 bg-linear-to-b from-[#deebf8] to-[#b7d3ec] pl-0.5">
              <CopyIcon className="size-2.5" /><SortIcon className="size-2.5" /><Binoculars className="size-2.5" /><Rows className="size-2" />
            </div>
            <ImportanceChart />
            <div className="mx-4 mt-auto">
              <div className="relative h-[23px] bg-[#e2effb]">
                <svg viewBox="0 0 590 23" className="h-full w-full" aria-hidden="true">
                  <path d="M8 15 H580" stroke="#4444dd" strokeWidth="2" />
                  <rect x="1" y="2" width="13" height="9" fill="#eef" stroke="#6a6aa0" />
                  <rect x="572" y="2" width="13" height="9" fill="#eef" stroke="#6a6aa0" />
                  <path d="M11 11 V16 L7 21 M583 11 V16 L580 21" fill="none" stroke="#333" strokeWidth="1.500" />
                  <text x="3" y="9" fontSize="7" fill="#556">0.0</text>
                  <text x="574" y="9" fontSize="7" fill="#556">1.0</text>
                </svg>
                <input type="range" aria-label="重要性下限" defaultValue={0} className="absolute inset-y-0 left-0 w-1/2 opacity-0" />
                <input type="range" aria-label="重要性上限" defaultValue={100} className="absolute inset-y-0 right-0 w-1/2 opacity-0" />
              </div>
              <div className="mt-1 mb-5 flex justify-between px-1 text-[#666]"><span>最不重要</span><span>最重要</span></div>
            </div>
            <div className="flex h-[15px] shrink-0 items-center gap-1.5 bg-linear-to-b from-[#deebf8] to-[#b7d3ec] pl-2">
              <label htmlFor="chart-view">查看(V):</label>
              <select id="chart-view" className="h-[13px] w-[61px] appearance-none bg-[#9fcaf4] pl-1"><option>预测变量重要性 ▾</option></select>
            </div>
          </div>
        </div>
        <div className="flex h-[22px] shrink-0 items-center gap-1 pr-1 pl-1">
          <button className={`${btn} ${smallBtn} h-[14px] w-8`}>确定</button>
          <button className={`${btn} ${smallBtn} mr-auto h-[14px] w-[33px]`}>取消</button>
          <button className={`${btn} ${smallBtn} h-[14px] w-8`}>应用(A)</button>
          <button className={`${btn} ${smallBtn} h-[14px] w-8`}>重置(R)</button>
        </div>
      </div>
      <div className="h-1 shrink-0 bg-linear-to-r from-[#030a1c] via-[#0a1f7a] to-[#030a1c]" />
    </div>
  </section>
);

export default function App() {
  return (
    <main className="bg-white pt-11 pb-[23px] font-['Liberation_Sans','Noto_Sans_CJK_SC',sans-serif]">
      <article className="space-y-6 pr-8 pl-[41px] font-['Noto_Sans_CJK_SC',sans-serif] text-2xl leading-10 font-[350] text-[#333] [text-spacing-trim:space-all]">
        <p>我们分析学生成绩的分布情况，发现所占比例最多的是成绩合格的学生（49.11%），其次是成绩不合格的学生（28.89%），然后是缺考学生（18.85%）和成绩优秀的学生(3.14%)。</p>
        <p className="pl-20">三个科目中，英语成绩最好，计算机次之，数学较差，且英语和计算机成绩的分布偏右（偏布偏左，偏度为 0.198）</p>
        <p>度分别为 -0.804 和-0.671），说明英语和计算机的成绩普遍较好，而数学成缆则不太理想 （分根据成绩相关性分析，发现英语和计算机的关联性较强（英语不合格可能会导致计算机不合格，英语合格可<br />能有助于计算机合格，计算机不合格可能会导致英语不合格），而英语不合格或者计算机不合格都有可能导致数学不合格。</p>
        <p>根据学生的个人情况，预测学生的总分情况，在预测参数中，影响因子最大的是性别（74%），其次是人学年份（9%）、省份（8%）、考生类型（5%）、学科（3%）。根据绘制出来的决策树，可以依据<br />各 个影响因子预测学生的成绩。</p>
        <p>根据上面的预测，也可以找出各类学生群的特征，例如，缺考学生群的特征等。</p>
      </article>
      <div className="mt-[66px] grid grid-cols-[1088fr_996fr] gap-x-[70px] gap-y-[25px] pr-[68px] pl-[22px]">
        <AuditWindow />
        <CorrelationWindow />
        <div className="pt-[26px] pr-5 pl-7"><GradeChart /></div>
        <div className="pr-[62px] pl-[62px]"><TreeWindow /></div>
      </div>
    </main>
  );
}
